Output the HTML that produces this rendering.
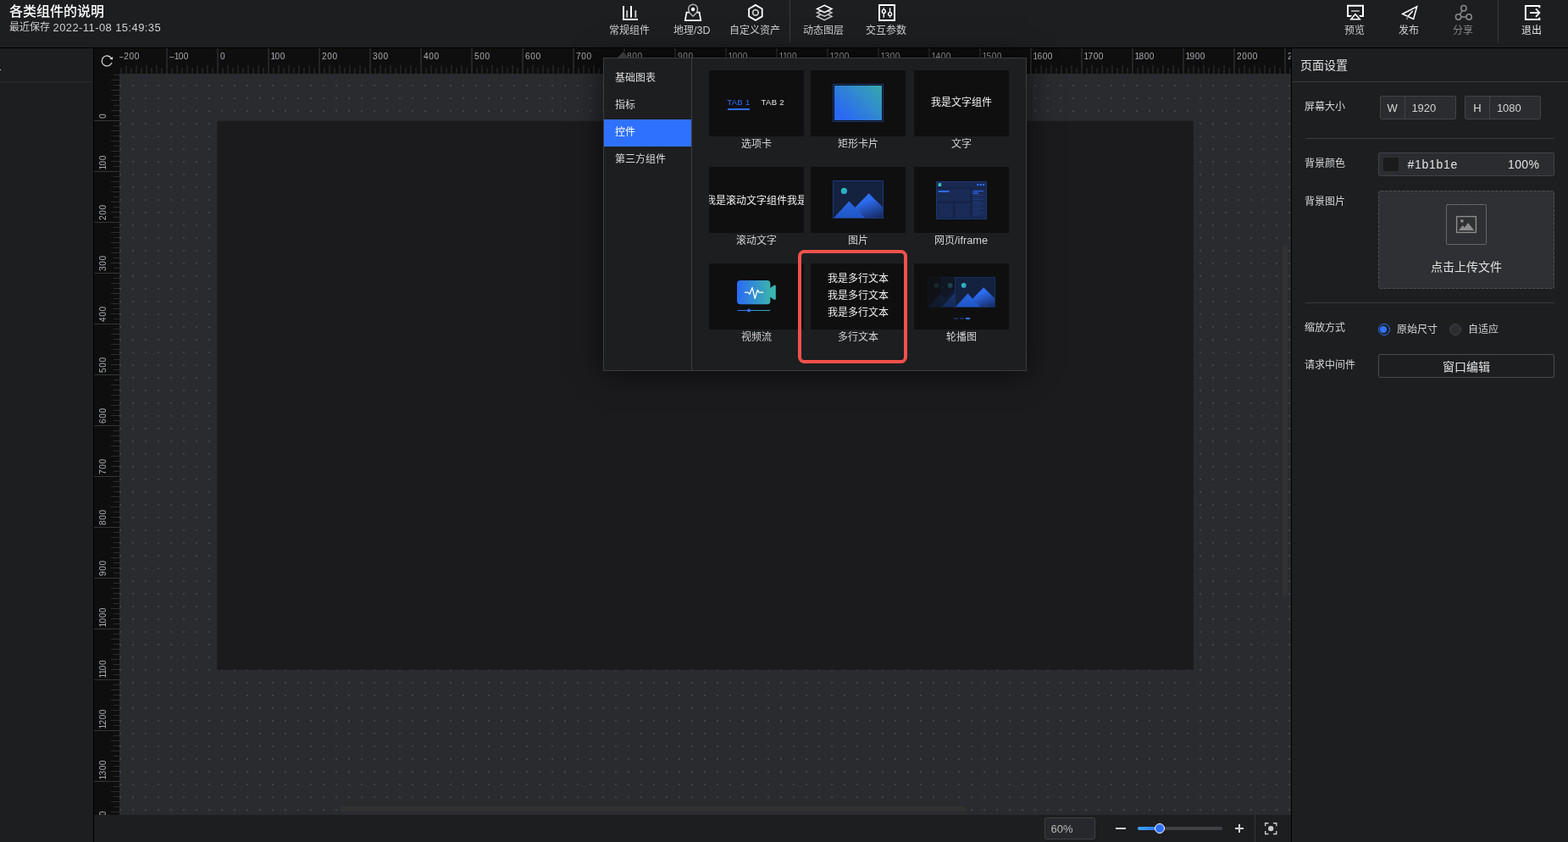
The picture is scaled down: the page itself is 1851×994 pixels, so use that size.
<!DOCTYPE html>
<html lang="zh-CN">
<head>
<meta charset="utf-8">
<title>各类组件的说明</title>
<style>
html,body{margin:0;padding:0;background:#1d1e20;}
body{width:1851px;height:994px;overflow:hidden;font-family:"Liberation Sans","Noto Sans CJK SC",sans-serif;color:#d4d4d4;}
#app{will-change:transform;position:relative;width:1851px;height:994px;overflow:hidden;background:#1d1e20;}
#app div,#app svg.a,#app i{position:absolute;box-sizing:border-box;}
#app i{display:block;}
.t{white-space:nowrap;line-height:1em;height:1em;font-family:"Liberation Sans","Noto Sans CJK SC",sans-serif;}
.l{white-space:nowrap;line-height:1em;height:1em;}
svg.a{overflow:visible;}
.rl{transform:rotate(-90deg);transform-origin:0 0;}
.rt{font-size:10.2px;letter-spacing:.55px;color:#a6aab0;}
.rt b{font-weight:400;margin:0 -1.3px 0 -.5px;}

</style>
</head>
<body>
<div id="app">
<div class="topbar" style="left:0px;top:0px;width:1851px;height:56px;background:#1d1e20"></div>
<div style="left:0px;top:56px;width:1851px;height:1px;background:#000"></div>
<div class="t" style="left:11px;top:6px;font-size:16px;color:#fff;font-weight:500;">各类组件的说明</div>
<div class="t" style="left:11px;top:26px;font-size:12px;color:#cfcfcf;">最近保存<span style="font-size:13px;letter-spacing:.41px;position:relative;top:.5px;left:-.5px"> 2022-11-08 15:49:35</span></div>
<svg class="a" style="left:700px;top:0px" width="1151" height="56" viewBox="700 0 1151 56" ><g fill="#fff"><rect x="735" y="7" width="2" height="17"/><rect x="735" y="22" width="18" height="2"/><rect x="744" y="7" width="2" height="13.7"/></g><g fill="#c4c4c4"><rect x="739.2" y="12.2" width="2" height="8.5"/><rect x="749.3" y="12.2" width="2" height="8.5"/></g><g fill="none" stroke-linejoin="miter"><path stroke="#fff" stroke-width="1.7" d="M810.5 14.7 L808.8 24.2 H827.3 L825.6 14.7 Z"/><path fill="#1d1e20" stroke="#b4b4b4" stroke-width="1.5" d="M818.1 19.1 C815.2 17 812.7 14.2 812.7 10.6 A5.4 5.4 0 1 1 823.5 10.6 C823.5 14.2 821 17 818.1 19.1 Z"/></g><circle cx="818.1" cy="11" r="2.2" fill="#fff"/><g fill="none"><path stroke="#fff" stroke-width="1.8" d="M891.9 5.9 L899.7 10.4 V19.4 L891.9 23.9 L884.1 19.4 V10.4 Z"/><circle cx="891.9" cy="14.9" r="3.3" stroke="#c6c6c6" stroke-width="1.8"/></g><g fill="#1d1e20" stroke-width="1.5" stroke-linejoin="miter"><path stroke="#c2c2c2" d="M973.2 15.2 L981.9 19.4 L973.2 23.6 L964.5 19.4 Z"/><path stroke="#c2c2c2" d="M973.2 10.8 L981.9 15 L973.2 19.2 L964.5 15 Z"/><path stroke="#fff" d="M973.2 6.3 L981.9 10.5 L973.2 14.6 L964.5 10.5 Z"/></g><g fill="none" stroke="#fff"><rect x="1038" y="6" width="18" height="18" stroke-width="2"/><g stroke-width="1.4"><path d="M1043.3 9.3 V20.7 M1050.6 9.3 V20.7"/><circle cx="1043.3" cy="13.4" r="2" fill="#1d1e20"/><circle cx="1050.6" cy="16.6" r="2" fill="#1d1e20"/></g></g><g fill="none" stroke="#fff"><path stroke-width="2" d="M1597.6 18.9 H1591 V6.8 H1609 V18.9 H1602.4"/><path stroke="#1d1e20" stroke-width="4.4" d="M1600 16.8 L1605.2 22.8 H1594.8 Z"/><path stroke-width="1.6" d="M1600 16.8 L1605.2 22.8 H1594.8 Z"/></g><rect x="1595.1" y="12.2" width="9.7" height="1.6" fill="#c0c0c0"/><g fill="none" stroke="#fff" stroke-width="1.5" stroke-linejoin="miter"><path d="M1655.6 16.5 L1672.7 7.8 L1668.6 22.5 Z"/><path d="M1661.8 19.4 L1667.8 13"/><path stroke="#888" d="M1661.9 19.3 L1660.8 23.2"/></g><g fill="none" stroke="#8a8a8a" stroke-width="1.5"><circle cx="1727.9" cy="9.8" r="3.2"/><circle cx="1721.6" cy="20" r="3.2"/><circle cx="1734.1" cy="20" r="3.2"/><path d="M1726.2 12.6 L1723.3 17.2 M1724.8 20 H1730.9"/></g><g fill="none" stroke="#fff" stroke-linejoin="miter"><path stroke-width="2" d="M1817.3 9.2 V6.9 H1800.9 V23.1 H1817.3 V20.8"/><path stroke-width="1.8" d="M1806 15.1 H1816.5 M1813 10.4 L1817.4 15.1 L1813 19.8"/></g></svg>
<div style="left:932px;top:0px;width:1px;height:50px;background:#3a3b3d"></div>
<div style="left:1768px;top:0px;width:1px;height:50px;background:#3a3b3d"></div>
<div class="t" style="left:719px;top:30px;font-size:12px;color:#cdcdcd;">常规组件</div>
<div class="t" style="left:795px;top:30px;font-size:12px;color:#cdcdcd;">地理<span style="font-size:12.5px">/3D</span></div>
<div class="t" style="left:861px;top:30px;font-size:12px;color:#cdcdcd;">自定义资产</div>
<div class="t" style="left:948px;top:30px;font-size:12px;color:#cdcdcd;">动态图层</div>
<div class="t" style="left:1022px;top:30px;font-size:12px;color:#cdcdcd;">交互参数</div>
<div class="t" style="left:1587px;top:30px;font-size:12px;color:#cdcdcd;">预览</div>
<div class="t" style="left:1651px;top:30px;font-size:12px;color:#cdcdcd;">发布</div>
<div class="t" style="left:1715px;top:30px;font-size:12px;color:#858585;">分享</div>
<div class="t" style="left:1796px;top:30px;font-size:12px;color:#e2e2e2;">退出</div>
<div class="leftpanel" style="left:0px;top:57px;width:110px;height:937px;background:#1d1e20"></div>
<div style="left:0px;top:96px;width:110px;height:1px;background:#2c2d2f"></div>
<div style="left:0px;top:82px;width:1px;height:1px;background:#e0e0e0"></div>
<div style="left:110px;top:57px;width:1px;height:937px;background:#000"></div>
<div class="ruler-top-bg" style="left:111px;top:57px;width:1413px;height:30px;background:#0e0e0e"></div>
<div class="ruler-top" style="left:141px;top:57px;width:1383px;height:30px;background:linear-gradient(90deg,#242527 2px,transparent 2px) 55px 0/60px 30px repeat-x,linear-gradient(90deg,#1f2022 2px,transparent 2px) 7px 20px/12px 10px repeat-x,linear-gradient(90deg,#1f2022 2px,transparent 2px) 1px 23px/12px 7px repeat-x;overflow:hidden"><div class="l rt" style="left:-1.0px;top:4.87px">–200</div><div class="l rt" style="left:59.0px;top:4.87px">–<b>1</b>00</div><div class="l rt" style="left:119.0px;top:4.87px">0</div><div class="l rt" style="left:179.0px;top:4.87px"><b>1</b>00</div><div class="l rt" style="left:239.0px;top:4.87px">200</div><div class="l rt" style="left:299.0px;top:4.87px">300</div><div class="l rt" style="left:359.0px;top:4.87px">400</div><div class="l rt" style="left:419.0px;top:4.87px">500</div><div class="l rt" style="left:479.0px;top:4.87px">600</div><div class="l rt" style="left:539.0px;top:4.87px">700</div><div class="l rt" style="left:599.0px;top:4.87px">800</div><div class="l rt" style="left:659.0px;top:4.87px">900</div><div class="l rt" style="left:719.0px;top:4.87px"><b>1</b>000</div><div class="l rt" style="left:779.0px;top:4.87px"><b>1</b><b>1</b>00</div><div class="l rt" style="left:839.0px;top:4.87px"><b>1</b>200</div><div class="l rt" style="left:899.0px;top:4.87px"><b>1</b>300</div><div class="l rt" style="left:959.0px;top:4.87px"><b>1</b>400</div><div class="l rt" style="left:1019.0px;top:4.87px"><b>1</b>500</div><div class="l rt" style="left:1079.0px;top:4.87px"><b>1</b>600</div><div class="l rt" style="left:1139.0px;top:4.87px"><b>1</b>700</div><div class="l rt" style="left:1199.0px;top:4.87px"><b>1</b>800</div><div class="l rt" style="left:1259.0px;top:4.87px"><b>1</b>900</div><div class="l rt" style="left:1319.0px;top:4.87px">2000</div><div class="l rt" style="left:1379.0px;top:4.87px">2<b>1</b>00</div></div>
<svg class="a" style="left:111px;top:57px" width="30" height="30" viewBox="111 57 30 30" ><g fill="none" stroke="#d6d6d6" stroke-width="1.3" stroke-linecap="round"><path d="M131.4 68.9 A6 6 0 1 0 131.7 74.4"/></g><path fill="#d6d6d6" d="M129.3 69.6 L133.2 67.1 L133 70.6 Z"/></svg>
<div class="ruler-left" style="left:111px;top:87px;width:30px;height:875px;background:linear-gradient(#343537 1px,transparent 1px) 0 55px/30px 60px repeat-y,linear-gradient(#2c2d2f 1px,transparent 1px) 20px 7px/10px 12px repeat-y,linear-gradient(#2c2d2f 1px,transparent 1px) 23px 1px/7px 12px repeat-y,#0e0e0e;overflow:hidden"><div class="l rt rl" style="left:6.3px;top:52.5px">0</div><div class="l rt rl" style="left:6.3px;top:112.5px"><b>1</b>00</div><div class="l rt rl" style="left:6.3px;top:172.5px">200</div><div class="l rt rl" style="left:6.3px;top:232.5px">300</div><div class="l rt rl" style="left:6.3px;top:292.5px">400</div><div class="l rt rl" style="left:6.3px;top:352.5px">500</div><div class="l rt rl" style="left:6.3px;top:412.5px">600</div><div class="l rt rl" style="left:6.3px;top:472.5px">700</div><div class="l rt rl" style="left:6.3px;top:532.5px">800</div><div class="l rt rl" style="left:6.3px;top:592.5px">900</div><div class="l rt rl" style="left:6.3px;top:652.5px"><b>1</b>000</div><div class="l rt rl" style="left:6.3px;top:712.5px"><b>1</b><b>1</b>00</div><div class="l rt rl" style="left:6.3px;top:772.5px"><b>1</b>200</div><div class="l rt rl" style="left:6.3px;top:832.5px"><b>1</b>300</div><div class="l rt rl" style="left:6.3px;top:892.5px"><b>1</b>400</div></div>
<div class="canvas" style="left:141px;top:87px;width:1383px;height:875px;background:linear-gradient(90deg,transparent 2px,#2a2b2f 2px) 0 0/15px 15px,linear-gradient(180deg,transparent 2px,#2a2b2f 2px) 0 13px/15px 15px,#434448;overflow:hidden"><svg class="a page" style="left:0;top:0" width="1383" height="875" viewBox="141 87 1383 875"><rect x="256.45" y="142.7" width="1152.4" height="648.15" fill="#1b1b1e"/></svg><div class="vscroll" style="left:1373px;top:202px;width:6px;height:416px;background:#313131;border-radius:3px"></div><div class="hscroll" style="left:260px;top:865px;width:739px;height:6px;background:#313131;border-radius:3px"></div></div>
<div class="bottombar" style="left:111px;top:962px;width:1413px;height:32px;background:#1d1e20"></div>
<div class="zoom-input" style="left:1233px;top:965px;width:60px;height:26px;background:#27282b;border:1px solid #3f4043;border-radius:2px"></div>
<div class="l" style="left:1240.6px;top:972.20px;font-size:13px;color:#b9b9b9;">60%</div>
<div style="left:1317px;top:977px;width:12px;height:2px;background:#d2d2d2"></div>
<div style="left:1343px;top:976px;width:100px;height:4px;background:#404145;border-radius:2px"></div>
<div style="left:1343px;top:976px;width:26px;height:4px;background:linear-gradient(90deg,#3aa4ff,#2f74ff);border-radius:2px"></div>
<div style="left:1362.5px;top:972px;width:12px;height:12px;background:#2f6ff6;border:1.5px solid #fff;border-radius:50%"></div>
<div style="left:1458px;top:977px;width:10px;height:2px;background:#d2d2d2"></div>
<div style="left:1462px;top:973px;width:2px;height:10px;background:#d2d2d2"></div>
<div style="left:1481px;top:962px;width:1px;height:32px;background:#333436"></div>
<svg class="a" style="left:1490px;top:966px" width="22" height="24" viewBox="1490 966 22 24" ><g fill="none" stroke="#c9c9c9" stroke-width="1.4"><path d="M1493.7 975.2 V971.7 H1497.5 M1503 971.7 H1506.8 V975.2 M1506.8 981 V984.5 H1503 M1497.5 984.5 H1493.7 V981"/></g><circle cx="1500.2" cy="978.1" r="3.2" fill="#c9c9c9"/></svg>
<div style="left:1524px;top:57px;width:1px;height:937px;background:#000"></div>
<div class="rightpanel" style="left:1525px;top:57px;width:326px;height:937px;background:#1d1e20"></div>
<div class="t" style="left:1535px;top:70px;font-size:14px;color:#e2e2e2;">页面设置</div>
<div style="left:1525px;top:96px;width:326px;height:1px;background:#38393b"></div>
<div class="t" style="left:1540px;top:120px;font-size:12px;color:#d6d6d6;">屏幕大小</div>
<div class="inp" style="left:1629px;top:113px;width:90px;height:28px;background:#2b2c2f;border:1px solid #434447;border-radius:2px"></div>
<div style="left:1658px;top:114px;width:1px;height:26px;background:#434447"></div>
<div class="l" style="left:1637.6px;top:120.90px;font-size:13px;color:#d8d8d8;">W</div>
<div class="l" style="left:1666.4px;top:121.00px;font-size:13px;color:#d2d2d2;">1920</div>
<div class="inp" style="left:1729px;top:113px;width:90px;height:28px;background:#2b2c2f;border:1px solid #434447;border-radius:2px"></div>
<div style="left:1758px;top:114px;width:1px;height:26px;background:#434447"></div>
<div class="l" style="left:1739.2px;top:120.90px;font-size:13px;color:#d8d8d8;">H</div>
<div class="l" style="left:1766.9px;top:121.00px;font-size:13px;color:#d2d2d2;">1080</div>
<div style="left:1541px;top:163px;width:294px;height:1px;background:#3a3b3d"></div>
<div class="t" style="left:1540px;top:187px;font-size:12px;color:#d6d6d6;">背景颜色</div>
<div class="inp" style="left:1627px;top:180px;width:208px;height:28px;background:#2b2c2f;border:1px solid #434447;border-radius:2px"></div>
<div style="left:1633px;top:186px;width:18px;height:16px;background:#1b1b1e;border-radius:2px"></div>
<div class="l" style="left:1661.5px;top:187.45px;font-size:14px;color:#e2e2e2;letter-spacing:.7px">#1b1b1e</div>
<div class="l" style="left:1780px;top:187.45px;font-size:14px;color:#e2e2e2;letter-spacing:.35px">100%</div>
<div class="t" style="left:1540px;top:232px;font-size:12px;color:#d6d6d6;">背景图片</div>
<div class="upload" style="left:1627px;top:225px;width:208px;height:116px;background:#2f3033;border:1px dashed #505154;border-radius:3px"></div>
<div style="left:1707px;top:241px;width:48px;height:48px;border:1px dotted #9c9c9c;border-radius:2px"></div>
<svg class="a" style="left:1716px;top:252px" width="30" height="26" viewBox="1716 252 30 26" ><rect x="1719.6" y="255.6" width="22.8" height="18.8" fill="none" stroke="#8c8c8c" stroke-width="1.4"/><circle cx="1725.9" cy="260.8" r="1.9" fill="#8c8c8c"/><path fill="#8c8c8c" d="M1721.8 272 L1726.8 266 L1728.9 268.5 L1733.2 263 L1740.2 272 Z"/></svg>
<div class="t" style="left:1689px;top:308px;font-size:14px;color:#e2e2e2;">点击上传文件</div>
<div style="left:1541px;top:357px;width:294px;height:1px;background:#3a3b3d"></div>
<div class="t" style="left:1540px;top:381px;font-size:12px;color:#d6d6d6;">缩放方式</div>
<div class="radio on" style="left:1626.8px;top:382.1px;width:14px;height:14px;border:1.5px solid #2f74ff;border-radius:50%"><i style="left:1.5px;top:1.5px;width:8px;height:8px;border-radius:50%;background:#2f74ff"></i></div>
<div class="t" style="left:1649px;top:383px;font-size:12px;color:#d6d6d6;">原始尺寸</div>
<div class="radio" style="left:1710.9px;top:382.1px;width:14px;height:14px;background:#2c2d30;border:1px solid #434447;border-radius:50%"></div>
<div class="t" style="left:1733px;top:383px;font-size:12px;color:#d6d6d6;">自适应</div>
<div class="t" style="left:1540px;top:425px;font-size:12px;color:#d6d6d6;">请求中间件</div>
<div class="btn" style="left:1627px;top:418px;width:208px;height:28px;border:1px solid #4a4b4e;border-radius:2px"></div>
<div class="t" style="left:1703px;top:426px;font-size:14px;color:#e2e2e2;">窗口编辑</div>
<svg class="a" style="left:727px;top:60px" width="18" height="9" viewBox="727 60 18 9" ><path fill="#4a4b4d" d="M728.6 68.2 L735.6 61.2 L742.6 68.2 Z"/></svg>
<div class="popup" style="left:712px;top:68px;width:500px;height:370px;background:#1d1e20;border:1px solid #3c3d3f;box-shadow:0 1px 32px 1px rgba(0,0,0,.62)"><div style="left:0px;top:72px;width:103px;height:32px;background:#2e71ff"></div><div style="left:103px;top:0px;width:1px;height:368px;background:#3c3d3f"></div><div class="t" style="left:13px;top:17px;font-size:12px;color:#dadada;">基础图表</div><div class="t" style="left:13px;top:49px;font-size:12px;color:#dadada;">指标</div><div class="t" style="left:13px;top:81px;font-size:12px;color:#fff;">控件</div><div class="t" style="left:13px;top:113px;font-size:12px;color:#dadada;">第三方组件</div><div class="thumb" style="left:124px;top:14px;width:112px;height:78px;background:#0f0f10;overflow:hidden"><div class="l" style="left:21.3px;top:33.36px;font-size:9.5px;color:#2f6ff6;letter-spacing:.3px">TAB 1</div><div style="left:22px;top:45px;width:26px;height:2px;background:#2f6ff6"></div><div class="l" style="left:61.6px;top:33.36px;font-size:9.5px;color:#e6e6e6;letter-spacing:.3px">TAB 2</div></div><div class="t" style="left:162px;top:95px;font-size:12px;color:#d2d2d2;">选项卡</div><div class="thumb" style="left:244px;top:14px;width:112px;height:78px;background:#0f0f10;overflow:hidden"><div style="left:26px;top:16px;width:60px;height:45px;border:1px solid #1b3877;padding:1px;background:linear-gradient(45deg,#2a68f2 15%,#37a9ad 100%) content-box,#0f0f10"></div></div><div class="t" style="left:276px;top:95px;font-size:12px;color:#d2d2d2;">矩形卡片</div><div class="thumb" style="left:366px;top:14px;width:112px;height:78px;background:#0f0f10;overflow:hidden"><div class="t" style="left:20px;top:32px;font-size:12px;color:#f4f4f4;">我是文字组件</div></div><div class="t" style="left:410px;top:95px;font-size:12px;color:#d2d2d2;">文字</div><div class="thumb" style="left:124px;top:128px;width:112px;height:78px;background:#0f0f10;overflow:hidden"><div class="t" style="left:-4px;top:34px;font-size:12px;color:#f4f4f4;">我是滚动文字组件我是</div></div><div class="t" style="left:156px;top:209px;font-size:12px;color:#d2d2d2;">滚动文字</div><div class="thumb" style="left:244px;top:128px;width:112px;height:78px;background:#0f0f10;overflow:hidden"><svg class="a" style="left:26px;top:16px" width="60" height="45" viewBox="0 0 60 45"><defs><linearGradient id="p1a" x1="0" y1="0" x2="0" y2="1"><stop offset="0" stop-color="#2a66e2"/><stop offset="1" stop-color="#1f56c6"/></linearGradient><linearGradient id="p1b" x1=".25" y1="0" x2=".85" y2="1"><stop offset="0" stop-color="#2f74ff"/><stop offset=".35" stop-color="#2c6cf0"/><stop offset="1" stop-color="#172a62"/></linearGradient><linearGradient id="p1c" x1="0" y1="0" x2="1" y2="1"><stop offset="0" stop-color="#2fc0b8"/><stop offset="1" stop-color="#2a9fcf"/></linearGradient><clipPath id="p1k"><rect x="1" y="1" width="58" height="43"/></clipPath></defs><rect x=".5" y=".5" width="59" height="44" fill="#14213f" stroke="#1b3877"/><g clip-path="url(#p1k)"><path fill="url(#p1b)" d="M42.6 15.2 L60 32.6 V45 H14 Z"/><path fill="url(#p1a)" d="M19.3 24.5 L38.2 44.5 H1 Z"/></g><circle cx="13.4" cy="12.4" r="3.6" fill="url(#p1c)"/></svg></div><div class="t" style="left:288px;top:209px;font-size:12px;color:#d2d2d2;">图片</div><div class="thumb" style="left:366px;top:128px;width:112px;height:78px;background:#0f0f10;overflow:hidden"><svg class="a" style="left:0;top:0" width="112" height="78" viewBox="0 0 112 78"><rect x="26.5" y="17.5" width="59" height="44" fill="#142144" stroke="#1b3877"/><rect x="27" y="18" width="58" height="6.5" fill="#18284f"/><rect x="28.59999999999991" y="19.19999999999999" width="3.6" height="3.8" fill="#3fc1b0"/><rect x="74.2" y="20.1" width="2.2" height="2" fill="#2f74ff"/><rect x="77.6" y="20.1" width="2.2" height="2" fill="#2f74ff"/><rect x="81.0" y="20.1" width="2.2" height="2" fill="#2f74ff"/><rect x="27.5" y="25.6" width="39.3" height="15.2" fill="#192a54"/><rect x="28.6" y="28.1" width="12.8" height="1.8" fill="#2f74ff"/><g><rect x="27.5" y="42.6" width="18.7" height="17.6" fill="#192a54"/><path stroke="#1e3366" stroke-width=".6" d="M27.5 42.6 l18.7 17.6 M46.2 42.6 l-18.7 17.6"/></g><g><rect x="48" y="42.6" width="18.7" height="17.6" fill="#192a54"/><path stroke="#1e3366" stroke-width=".6" d="M48 42.6 l18.7 17.6 M66.7 42.6 l-18.7 17.6"/></g><rect x="68.2" y="25.6" width="16.8" height="34.6" fill="#192a54"/><rect x="69.4" y="28.2" width="12.6" height="1" fill="#2f74ff"/><rect x="69.4" y="30.2" width="6.6" height="1.8" fill="#2a5fd2"/><rect x="69.4" y="33.1" width="12.6" height=".9" fill="#223f80"/><rect x="69.4" y="35.8" width="8.4" height=".9" fill="#223f80"/><rect x="69.4" y="38.2" width="12.6" height=".9" fill="#223f80"/><rect x="69.4" y="41.0" width="8.4" height=".9" fill="#223f80"/><rect x="69.4" y="43.3" width="12.6" height=".9" fill="#223f80"/><rect x="69.4" y="46.1" width="8.4" height=".9" fill="#223f80"/><rect x="69.4" y="48.5" width="12.6" height=".9" fill="#223f80"/><rect x="69.4" y="51.1" width="8.4" height=".9" fill="#223f80"/><rect x="69.4" y="53.7" width="12.6" height=".9" fill="#223f80"/><rect x="69.4" y="56.3" width="8.4" height=".9" fill="#223f80"/></svg></div><div class="t" style="left:390px;top:209px;font-size:12px;color:#d2d2d2;">网页<span style="font-size:12.8px">/iframe</span></div><div class="thumb" style="left:124px;top:242px;width:112px;height:78px;background:#0f0f10;overflow:hidden"><svg class="a" style="left:0;top:0" width="112" height="78" viewBox="837 311 112 78"><defs><linearGradient id="vg" x1="0" y1="0" x2="1" y2="0"><stop offset="0" stop-color="#2b69f6"/><stop offset="1" stop-color="#3ab2ae"/></linearGradient><linearGradient id="vl" x1="0" y1="0" x2="1" y2="0"><stop offset="0" stop-color="#2f74ff"/><stop offset="1" stop-color="#35b0b4"/></linearGradient></defs><path fill="#3ab6b0" d="M908.5 340.4 L913.4 336.9 Q915.8 335.6 915.8 338.2 V352.2 Q915.8 354.8 913.4 353.5 L908.5 350 Z"/><rect x="870" y="331" width="39.4" height="28.2" rx="4" fill="url(#vg)"/><path fill="none" stroke="#fff" stroke-width="1.3" stroke-linejoin="round" stroke-linecap="round" d="M879.3 345.1 H883.2 L884.9 347.3 L888 339.4 L891.2 352.3 L894.3 342.4 L896.2 345.1 H900.8"/><rect x="870.6" y="366" width="38.4" height="1" fill="url(#vl)"/><circle cx="884" cy="366.5" r="2" fill="#2f74f2"/></svg></div><div class="t" style="left:162px;top:323px;font-size:12px;color:#d2d2d2;">视频流</div><div class="thumb" style="left:244px;top:242px;width:112px;height:78px;background:#0f0f10;overflow:hidden"><div class="t" style="left:20px;top:12px;font-size:12px;color:#f0f0f0;">我是多行文本</div><div class="t" style="left:20px;top:32px;font-size:12px;color:#f0f0f0;">我是多行文本</div><div class="t" style="left:20px;top:52px;font-size:12px;color:#f0f0f0;">我是多行文本</div></div><div class="t" style="left:276px;top:323px;font-size:12px;color:#d2d2d2;">多行文本</div><div class="thumb" style="left:366px;top:242px;width:112px;height:78px;background:#0f0f10;overflow:hidden"><div style="left:16px;top:16px;width:48px;height:36px;opacity:.15"><svg class="a" style="left:0px;top:0px" width="48" height="36" viewBox="0 0 60 45"><defs><linearGradient id="c1a" x1="0" y1="0" x2="0" y2="1"><stop offset="0" stop-color="#2a66e2"/><stop offset="1" stop-color="#1f56c6"/></linearGradient><linearGradient id="c1b" x1=".25" y1="0" x2=".85" y2="1"><stop offset="0" stop-color="#2f74ff"/><stop offset=".35" stop-color="#2c6cf0"/><stop offset="1" stop-color="#172a62"/></linearGradient><linearGradient id="c1c" x1="0" y1="0" x2="1" y2="1"><stop offset="0" stop-color="#2fc0b8"/><stop offset="1" stop-color="#2a9fcf"/></linearGradient><clipPath id="c1k"><rect x="1" y="1" width="58" height="43"/></clipPath></defs><rect x=".5" y=".5" width="59" height="44" fill="#14213f" stroke="#1b3877"/><g clip-path="url(#c1k)"><path fill="url(#c1b)" d="M42.6 15.2 L60 32.6 V45 H14 Z"/><path fill="url(#c1a)" d="M19.3 24.5 L38.2 44.5 H1 Z"/></g><circle cx="13.4" cy="12.4" r="3.6" fill="url(#c1c)"/></svg></div><div style="left:32px;top:16px;width:48px;height:36px;opacity:.32;background:#0f0f10"><svg class="a" style="left:0px;top:0px" width="48" height="36" viewBox="0 0 60 45"><defs><linearGradient id="c2a" x1="0" y1="0" x2="0" y2="1"><stop offset="0" stop-color="#2a66e2"/><stop offset="1" stop-color="#1f56c6"/></linearGradient><linearGradient id="c2b" x1=".25" y1="0" x2=".85" y2="1"><stop offset="0" stop-color="#2f74ff"/><stop offset=".35" stop-color="#2c6cf0"/><stop offset="1" stop-color="#172a62"/></linearGradient><linearGradient id="c2c" x1="0" y1="0" x2="1" y2="1"><stop offset="0" stop-color="#2fc0b8"/><stop offset="1" stop-color="#2a9fcf"/></linearGradient><clipPath id="c2k"><rect x="1" y="1" width="58" height="43"/></clipPath></defs><rect x=".5" y=".5" width="59" height="44" fill="#14213f" stroke="#1b3877"/><g clip-path="url(#c2k)"><path fill="url(#c2b)" d="M42.6 15.2 L60 32.6 V45 H14 Z"/><path fill="url(#c2a)" d="M19.3 24.5 L38.2 44.5 H1 Z"/></g><circle cx="13.4" cy="12.4" r="3.6" fill="url(#c2c)"/></svg></div><div style="left:48px;top:16px;width:48px;height:36px;background:#0f0f10"><svg class="a" style="left:0px;top:0px" width="48" height="36" viewBox="0 0 60 45"><defs><linearGradient id="c3a" x1="0" y1="0" x2="0" y2="1"><stop offset="0" stop-color="#2a66e2"/><stop offset="1" stop-color="#1f56c6"/></linearGradient><linearGradient id="c3b" x1=".25" y1="0" x2=".85" y2="1"><stop offset="0" stop-color="#2f74ff"/><stop offset=".35" stop-color="#2c6cf0"/><stop offset="1" stop-color="#172a62"/></linearGradient><linearGradient id="c3c" x1="0" y1="0" x2="1" y2="1"><stop offset="0" stop-color="#2fc0b8"/><stop offset="1" stop-color="#2a9fcf"/></linearGradient><clipPath id="c3k"><rect x="1" y="1" width="58" height="43"/></clipPath></defs><rect x=".5" y=".5" width="59" height="44" fill="#14213f" stroke="#1b3877"/><g clip-path="url(#c3k)"><path fill="url(#c3b)" d="M42.6 15.2 L60 32.6 V45 H14 Z"/><path fill="url(#c3a)" d="M19.3 24.5 L38.2 44.5 H1 Z"/></g><circle cx="13.4" cy="12.4" r="3.6" fill="url(#c3c)"/></svg></div><div style="left:47px;top:64px;width:5px;height:2px;background:#1a2c58"></div><div style="left:54px;top:64px;width:5px;height:2px;background:#1a2c58"></div><div style="left:61px;top:64px;width:5px;height:2px;background:#2f74ff"></div></div><div class="t" style="left:404px;top:323px;font-size:12px;color:#d2d2d2;">轮播图</div><div class="hl" style="left:229px;top:226px;width:129px;height:134px;border:4px solid #f4514b;border-radius:7.5px"></div></div>
</div>
</body>
</html>
